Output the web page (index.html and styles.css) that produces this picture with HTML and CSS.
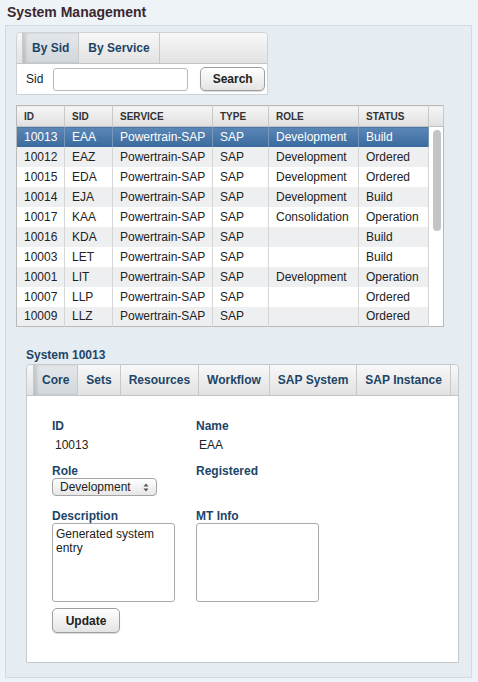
FILE: index.html
```html
<!DOCTYPE html>
<html lang="en">
<head>
  <meta charset="UTF-8" />
  <title>System Management</title>
  <link rel="stylesheet" href="styles.css">
</head>
<body>

  <h1 class="page-title">System Management</h1>

  <div class="main">

    <!-- Search -->
    <div class="search-box">
      <div class="tabs">
        <span class="tab active">By Sid</span>
        <span class="tab">By Service</span>
      </div>
      <div class="search-row">
        <label for="sid">Sid</label>
        <input type="text" id="sid" class="sid-input">
        <button class="btn search-btn">Search</button>
      </div>
    </div>

    <!-- Systems list -->
    <table class="grid">
      <colgroup>
        <col style="width:48px"><col style="width:48px"><col style="width:100px">
        <col style="width:56px"><col style="width:90px"><col style="width:70px"><col style="width:15px">
      </colgroup>
      <thead>
        <tr><th>ID</th><th>SID</th><th>SERVICE</th><th>TYPE</th><th>ROLE</th><th>STATUS</th><th></th></tr>
      </thead>
      <tbody>
        <tr class="selected"><td>10013</td><td>EAA</td><td>Powertrain-SAP</td><td>SAP</td><td>Development</td><td>Build</td>
          <td class="scroll-track" rowspan="10"><div class="thumb"></div></td></tr>
        <tr><td>10012</td><td>EAZ</td><td>Powertrain-SAP</td><td>SAP</td><td>Development</td><td>Ordered</td></tr>
        <tr><td>10015</td><td>EDA</td><td>Powertrain-SAP</td><td>SAP</td><td>Development</td><td>Ordered</td></tr>
        <tr><td>10014</td><td>EJA</td><td>Powertrain-SAP</td><td>SAP</td><td>Development</td><td>Build</td></tr>
        <tr><td>10017</td><td>KAA</td><td>Powertrain-SAP</td><td>SAP</td><td>Consolidation</td><td>Operation</td></tr>
        <tr><td>10016</td><td>KDA</td><td>Powertrain-SAP</td><td>SAP</td><td></td><td>Build</td></tr>
        <tr><td>10003</td><td>LET</td><td>Powertrain-SAP</td><td>SAP</td><td></td><td>Build</td></tr>
        <tr><td>10001</td><td>LIT</td><td>Powertrain-SAP</td><td>SAP</td><td>Development</td><td>Operation</td></tr>
        <tr><td>10007</td><td>LLP</td><td>Powertrain-SAP</td><td>SAP</td><td></td><td>Ordered</td></tr>
        <tr><td>10009</td><td>LLZ</td><td>Powertrain-SAP</td><td>SAP</td><td></td><td>Ordered</td></tr>
      </tbody>
    </table>

    <!-- Detail -->
    <div class="detail-title">System 10013</div>
    <div class="detail">
      <div class="tabs">
        <span class="tab active">Core</span>
        <span class="tab">Sets</span>
        <span class="tab">Resources</span>
        <span class="tab">Workflow</span>
        <span class="tab">SAP System</span>
        <span class="tab">SAP Instance</span>
      </div>
      <div class="detail-body">
        <div class="form">
          <div class="field">
            <span class="field-label">ID</span>
            <span class="field-value">10013</span>
          </div>
          <div class="field">
            <span class="field-label">Name</span>
            <span class="field-value">EAA</span>
          </div>
          <div class="field row2">
            <span class="field-label">Role</span>
            <span class="select-wrap">
              <select class="select"><option>Development</option></select>
              <svg class="select-arrows" width="6" height="9" viewBox="0 0 6 9"><path d="M0.5 3.5L3 0.5L5.5 3.5Z M0.5 5.5L3 8.5L5.5 5.5Z" fill="#555"/></svg>
            </span>
          </div>
          <div class="field row2">
            <span class="field-label">Registered</span>
          </div>
          <div class="field row3">
            <span class="field-label">Description</span>
            <textarea class="textbox">Generated system entry</textarea>
          </div>
          <div class="field row3">
            <span class="field-label">MT Info</span>
            <textarea class="textbox"></textarea>
          </div>
        </div>
        <button class="btn update-btn">Update</button>
      </div>
    </div>

  </div>

</body>
</html>
```

FILE: styles.css
```css
* {
  box-sizing: border-box;
}

body {
  margin: 0;
  background: #eef3f7;
  color: #222;
  font-family: "Liberation Sans", Arial, Helvetica, sans-serif;
  font-size: 12px;
}

.page-title {
  margin: 0;
  padding: 3px 7px 4px;
  font-size: 14px;
  line-height: 18px;
  color: #3b2730;
}

.main {
  margin: 0 6px 0 5px;
  padding: 6px 10px 14px 10px;
  background: #e5ecf2;
  border: 1px solid #d2dae2;
}

/* Tab strips */
.tabs {
  display: flex;
  height: 31px;
  padding-left: 5px;
  background: linear-gradient(#f8f8f8, #e2e2e2);
  border-bottom: 1px solid #c4c4c4;
  border-radius: 4px 4px 0 0;
}

.tab {
  display: flex;
  align-items: center;
  flex-shrink: 0;
  padding: 0 9px;
  white-space: nowrap;
  font-weight: bold;
  color: #1d4568;
  border-right: 1px solid #c9c9c9;
}

.tab.active {
  background: linear-gradient(#e4e8eb, #d2d7db);
  border-left: 1px solid #c9c9c9;
  box-shadow: inset 3px 0 3px rgba(0,0,0,0.12);
}

/* Search */
.search-box {
  width: 252px;
  background: #fff;
  border: 1px solid #cdd2d6;
  border-radius: 4px 4px 0 0;
}

.search-row {
  display: flex;
  align-items: center;
  height: 30px;
  padding: 0 2px 0 9px;
}

.search-row label {
  color: #222;
}

.sid-input {
  width: 135px;
  height: 23px;
  margin-left: 10px;
  border: 1px solid #b8b8b8;
  border-radius: 3px;
}

.btn {
  height: 24px;
  padding: 0;
  font-family: inherit;
  font-size: 12px;
  font-weight: bold;
  color: #222;
  background: linear-gradient(#ffffff, #e4e4e4);
  border: 1px solid #9d9d9d;
  border-radius: 5px;
  box-shadow: 0 1px 1px rgba(0,0,0,0.15);
}

.search-btn {
  width: 65px;
  margin-left: 12px;
}

/* Grid */
.grid {
  margin-top: 10px;
  width: 427px;
  table-layout: fixed;
  border-collapse: collapse;
  background: #fff;
  border: 1px solid #b9b9b9;
}

.grid th {
  height: 21px;
  padding: 0 7px;
  text-align: left;
  font-size: 10px;
  color: #333;
  background: linear-gradient(#f6f6f6, #e0e0e0);
  border-right: 1px solid #c8c8c8;
  border-bottom: 1px solid #c2c2c2;
}

.grid tbody tr {
  height: 20px;
}

.grid td {
  padding: 0 7px;
  white-space: nowrap;
  overflow: hidden;
  border-right: 1px solid #d6d6d6;
}

.grid tbody tr:nth-child(even) td {
  background: #eeeff1;
}

.grid tr.selected td {
  color: #fff;
  background: linear-gradient(#5b87b6, #3a6a9d);
  border-right-color: #7497bd;
}

.grid tr.selected td.scroll-track {
  padding: 3px 4px;
  vertical-align: top;
  background: #fff;
  border-right: none;
}

.thumb {
  width: 8px;
  height: 101px;
  border-radius: 4px;
  background: #c4c4c4;
}

/* Detail */
.detail-title {
  margin: 21px 0 2px 10px;
  font-weight: bold;
  line-height: 14px;
  color: #1d4568;
}

.detail {
  width: 433px;
  margin-left: 10px;
  background: #fff;
  border: 1px solid #c5c9cc;
  border-radius: 4px 4px 0 0;
}

.detail .tabs {
  padding-left: 6px;
}

.detail .tab {
  padding: 0 8px;
}

.detail-body {
  padding: 23px 25px 29px;
}

.form {
  display: grid;
  grid-template-columns: 144px 144px;
}

.field-label {
  display: block;
  font-weight: bold;
  line-height: 14px;
  color: #1d4568;
}

.field-value {
  display: block;
  margin-top: 5px;
  padding-left: 3px;
  line-height: 14px;
}

.row2 {
  margin-top: 12px;
}

.row3 {
  margin-top: 13px;
}

.select-wrap {
  position: relative;
  display: block;
  width: 105px;
}

.select {
  appearance: none;
  -webkit-appearance: none;
  display: block;
  width: 105px;
  height: 18px;
  padding: 0 0 0 7px;
  font-family: inherit;
  font-size: 12px;
  color: #222;
  background: linear-gradient(#ffffff, #e6e6e6);
  border: 1px solid #a5a5a5;
  border-radius: 4px;
}

.select-arrows {
  position: absolute;
  right: 8px;
  top: 5px;
}

.textbox {
  display: block;
  width: 123px;
  height: 79px;
  padding: 3px 3px;
  font-family: inherit;
  font-size: 12px;
  line-height: 14px;
  color: #222;
  border: 1px solid #a9a9a9;
  border-radius: 3px;
  resize: none;
}

.update-btn {
  display: block;
  width: 68px;
  height: 25px;
  margin-top: 6px;
}
```
